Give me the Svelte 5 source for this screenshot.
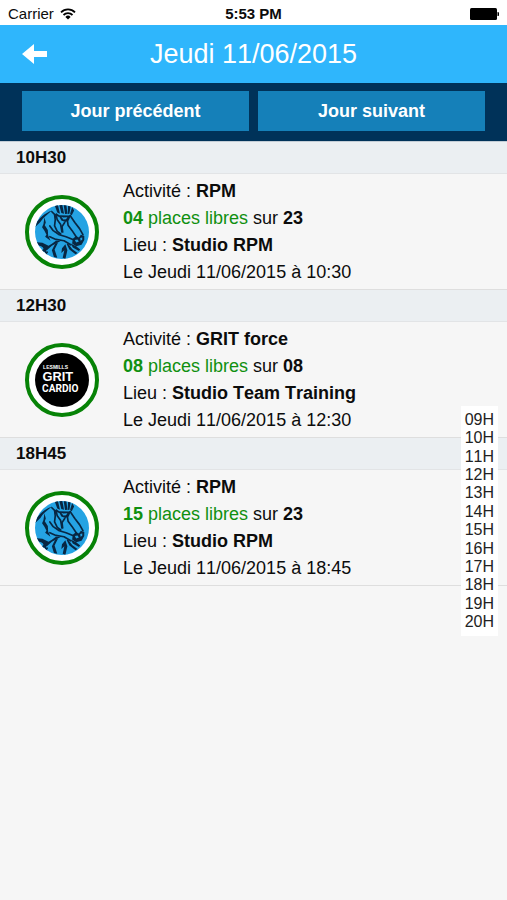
<script lang="ts">
	interface Course {
		time: string;
		activity: string;
		logo: 'rpm' | 'grit';
		free: string;
		total: string;
		place: string;
	}

	const date = 'Jeudi 11/06/2015';

	const courses: Course[] = [
		{ time: '10:30', activity: 'RPM', logo: 'rpm', free: '04', total: '23', place: 'Studio RPM' },
		{ time: '12:30', activity: 'GRIT force', logo: 'grit', free: '08', total: '08', place: 'Studio Team Training' },
		{ time: '18:45', activity: 'RPM', logo: 'rpm', free: '15', total: '23', place: 'Studio RPM' }
	];

	const hours = ['09', '10', '11', '12', '13', '14', '15', '16', '17', '18', '19', '20'];

	// Each hour jumps to the first course starting at that hour or later
	function target(hour: string) {
		const course = courses.find((c) => c.time.slice(0, 2) >= hour) ?? courses[courses.length - 1];
		return '#h' + course.time.replace(':', '');
	}
</script>

<div class="status">
	<div class="carrier">
		<span>Carrier</span>
		<svg width="16" height="12" viewBox="0 0 16 12" aria-hidden="true">
			<path d="M1 4.3a10 10 0 0 1 14 0M3.5 7a6.4 6.4 0 0 1 9 0" fill="none" stroke="#000" stroke-width="1.8" />
			<path d="M8 11.6 5.4 8.9a3.7 3.7 0 0 1 5.2 0z" />
		</svg>
	</div>
	<strong>5:53 PM</strong>
	<svg class="battery" width="29" height="12" viewBox="0 0 29 12" aria-hidden="true">
		<rect width="27" height="12" rx="1.5" />
		<path d="M27.500 4a2 2 0 0 1 0 4z" />
	</svg>
</div>

<header>
	<button class="back" aria-label="Retour">
		<svg width="25" height="20" viewBox="0 0 25 20" aria-hidden="true">
			<path d="M0 10 12 0v7h13v6H12v7z" fill="#fff" />
		</svg>
	</button>
	<h1>{date}</h1>
</header>

<nav>
	<button>Jour précédent</button>
	<button>Jour suivant</button>
</nav>

<main>
	{#each courses as course}
		<section id={'h' + course.time.replace(':', '')}>
			<h2>{course.time.replace(':', 'H')}</h2>
			<div class="course">
				<div class="logo">
					{#if course.logo === 'rpm'}
						<svg class="rider" viewBox="0 0 160 160" aria-hidden="true">
							<rect width="160" height="160" fill="#25a3e3" />
							<g fill="#082743">
								<!-- helmet and face -->
								<path d="M58 0h10l6 26-8-4zM72 0h9l5 26-8-2zM85 0h8l3 26-7 1zM98 2h8l-4 24-5 1zM110 6l6 10-7 14-5-4z" />
								<path d="M62 24l10 6 28 1 10-5-6 10-4 10-10 4-12-4-5-10-10-4z" />
								<path d="M78 35l6 2 12-1-4 6-8 1z" fill="#25a3e3" />
								<!-- back and flank -->
								<path d="M2 56c10-18 28-32 48-40-12 12-26 20-34 34L0 66z" />
								<path d="M28 36l4 16-3 8 9 14 1 16 7 16-16-12 4-6-6-12-7-10 4-10z" />
								<!-- handlebar and knees -->
								<path d="M6 110l16 2 18 9 10-6 12-9 14 1-26 14-14 12-12 8-10-1 14-12-10-6-16-4z" />
								<path d="M68 112l-10 20 8 24-10-2-6-20 10-20zM90 116l6 18-6 26-8-4 5-22-9 8 2-14z" />
								<path d="M98 114l12 16 16 12-6 4-18-14-8-16zM106 114l16 8 12 10-4 4-18-10z" />
								<!-- hands -->
								<path d="M112 100l10-8 8 4 6-8 10 4v12l-8 14-16 4-12-8z" />
								<path d="M118 104l8-2 4 6-8 3zM134 98l6-2v7l-5 3z" fill="#25a3e3" />
							</g>
							<g fill="none" stroke="#082743" stroke-width="5" stroke-linecap="round" stroke-linejoin="round">
								<path d="M50 20l8 8 2 16-2 18 8 16 10 8M62 28l4 16 10 14 4 22M88 52l-8 12 2 16M96 46l2 14 12 16 12 18M106 34l12 18 14 18 10 18" />
								<path d="M44 62l10 14 18 12 20 6 20 8M44 94l18 8 24 4 20 12M24 120l10 26M36 140l-12 14" />
							</g>
						</svg>
					{:else}
						<svg viewBox="0 0 160 160" aria-hidden="true">
							<circle cx="80" cy="80" r="80" />
							<g class="grit">
								<text x="24" y="47" font-size="15">LESMILLS</text>
								<text x="22" y="84" font-size="38">GRIT</text>
								<text class="cardio" x="21" y="116" font-size="30">CARDIO</text>
							</g>
						</svg>
					{/if}
				</div>
				<div class="details">
					<p>Activité : <strong>{course.activity}</strong></p>
					<p><span class="free"><strong>{course.free}</strong> places libres</span> sur <strong>{course.total}</strong></p>
					<p>Lieu : <strong>{course.place}</strong></p>
					<p>Le {date} à {course.time}</p>
				</div>
			</div>
		</section>
	{/each}
</main>

<div class="hours">
	{#each hours as hour}
		<a href={target(hour)}>{hour}H</a>
	{/each}
</div>

<style>
	:global(body) {
		background: #f6f6f6;
		color: #0c0c0c;
		font-family: 'Liberation Sans', Arial, sans-serif;
		font-size: 18px;
		font-kerning: none;
	}

	h1,
	h2,
	p {
		margin: 0;
	}

	button {
		border: 0;
		padding: 0;
		font: inherit;
		cursor: pointer;
	}

	.status {
		display: grid;
		grid-template-columns: 1fr auto 1fr;
		align-items: center;
		height: 25px;
		padding: 0 8px;
		background: #fff;
		font-size: 15px;
		line-height: 27px;
	}

	.carrier {
		display: flex;
		align-items: center;
		gap: 6px;
	}

	.battery {
		justify-self: end;
	}

	header {
		display: grid;
		grid-template-columns: 48px 1fr 48px;
		align-items: center;
		height: 58px;
		background: #2fb6fc;
		color: #fff;
	}

	.back {
		height: 58px;
		padding-left: 22px;
		background: none;
	}

	.back svg {
		display: block;
	}

	h1 {
		font-size: 27px;
		font-weight: 400;
		text-align: center;
	}

	nav {
		display: flex;
		gap: 9px;
		padding: 8px 22px 10px;
		border-bottom: 1px solid #c3cdd6;
		background: #003259;
	}

	nav button {
		flex: 1;
		height: 40px;
		background: #1580b9;
		color: #fff;
		font-weight: 700;
	}

	h2 {
		padding: 0 16px;
		border-bottom: 1px solid #e2e4e6;
		background: #ebeff2;
		font-size: 17px;
		line-height: 31px;
	}

	.course {
		display: flex;
		align-items: center;
		gap: 24px;
		padding: 4px 25px 3px;
		border-bottom: 1px solid #dedede;
	}

	.logo {
		display: flex;
		box-sizing: border-box;
		width: 74px;
		height: 74px;
		padding: 6px;
		border: 4px solid #078307;
		border-radius: 50%;
		background: #fff;
	}

	.logo svg {
		width: 100%;
	}

	.rider {
		border-radius: 50%;
	}

	.grit {
		fill: #fff;
		font-weight: 700;
	}

	.cardio {
		font-family: Roboto, 'Liberation Sans', sans-serif;
	}

	.details {
		line-height: 27px;
	}

	.free {
		color: #109010;
	}

	.hours {
		position: absolute;
		top: 406px;
		right: 9px;
		display: flex;
		flex-direction: column;
		justify-content: space-between;
		box-sizing: border-box;
		height: 230px;
		padding: 5px 4px;
		background: #fff;
		font-size: 16px;
		line-height: 18px;
	}

	.hours a {
		color: #222;
		text-decoration: none;
	}
</style>
